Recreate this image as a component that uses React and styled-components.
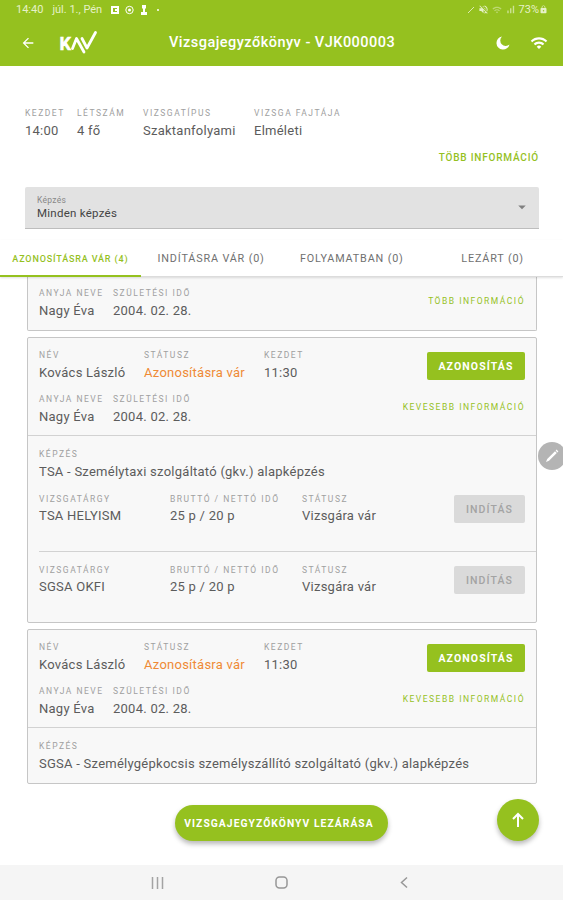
import styled, { createGlobalStyle } from "styled-components";
import { MdArrowBack, MdArrowDropDown, MdWifi, MdVolumeOff, MdSignalCellularAlt, MdLock } from "react-icons/md";

const GlobalStyle = createGlobalStyle`
  * {
    box-sizing: border-box;
  }
  body {
    margin: 0;
    background: #fff;
    font-family: Roboto, sans-serif;
  }
`;

const Screen = styled.div`
  position: relative;
  width: 563px;
  height: 900px;
  display: flex;
  flex-direction: column;
  overflow: hidden;
  color: #5c5c5c;
`;

const Header = styled.header`
  height: 66px;
  background: #95c11f;
  color: #fff;
`;

const StatusBar = styled.div`
  height: 19px;
  padding: 0 15px 0 16px;
  display: flex;
  align-items: center;
  justify-content: space-between;
  font-size: 11px;
  color: #e6f1c8;
`;

const StatusGroup = styled.div`
  display: flex;
  align-items: center;
  gap: ${(props) => props.$gap}px;
`;

const AppBar = styled.div`
  height: 47px;
  padding: 0 15px 0 20px;
  display: grid;
  grid-template-columns: 38px 60px 1fr 52px;
  align-items: center;
`;

const Title = styled.h1`
  margin: 0;
  padding-left: 51px;
  font-size: 14.5px;
  font-weight: 500;
  letter-spacing: 0.48px;
  white-space: nowrap;
`;

const HeaderIcons = styled.div`
  display: flex;
  align-items: center;
  justify-content: space-between;
`;

const Summary = styled.section`
  padding: 41px 24px 0 25px;
`;

const FieldRow = styled.div`
  display: flex;
`;

const FieldBox = styled.div`
  width: ${(props) => (props.$width ? `${props.$width}px` : "auto")};
  white-space: nowrap;
`;

const Label = styled.div`
  font-size: 8.5px;
  line-height: 12px;
  letter-spacing: 1.5px;
  text-transform: uppercase;
  color: #a0a0a0;
`;

const Value = styled.div`
  margin-top: 3px;
  font-size: 13px;
  line-height: 18px;
  letter-spacing: 0.25px;
  color: ${(props) => (props.$waiting ? "#ef8a35" : "#5c5c5c")};
`;

const InfoLink = styled.a`
  padding-bottom: ${(props) => (props.$large ? 0 : 6)}px;
  font-size: ${(props) => (props.$large ? 10 : 8.5)}px;
  line-height: 14px;
  font-weight: ${(props) => (props.$large ? 500 : 400)};
  letter-spacing: ${(props) => (props.$large ? 0.8 : 1.5)}px;
  color: #95c11f;
  white-space: nowrap;
`;

const SummaryLink = styled.div`
  display: flex;
  justify-content: flex-end;
  margin-top: 11px;
`;

const Select = styled.div`
  margin: 22px 24px 0 25px;
  height: 42px;
  padding: 0 8px 1px 12px;
  display: flex;
  align-items: center;
  justify-content: space-between;
  background: #e2e2e2;
  border-bottom: 1px solid #bdbdbd;
  border-radius: 2px 2px 0 0;
`;

const SelectLabel = styled.div`
  font-size: 8.5px;
  line-height: 12px;
  letter-spacing: 0.3px;
  color: #888;
`;

const SelectValue = styled.div`
  padding-bottom: 1px;
  font-size: 11.5px;
  line-height: 14px;
  letter-spacing: 0.25px;
  color: #444;
`;

const Tabs = styled.nav`
  position: relative;
  z-index: 1;
  height: 37px;
  margin-top: 11px;
  display: flex;
  background: #fff;
  border-bottom: 1px solid #dcdcdc;
  box-shadow: 0 1px 2px rgba(0, 0, 0, 0.12);
`;

const Tab = styled.div`
  flex: 1;
  height: 37px;
  padding-top: 2px;
  display: flex;
  align-items: center;
  justify-content: center;
  font-size: ${(props) => (props.$active ? 9 : 10.8)}px;
  font-weight: ${(props) => (props.$active ? 500 : 400)};
  letter-spacing: 0.85px;
  white-space: nowrap;
  color: ${(props) => (props.$active ? "#95c11f" : "#707070")};
  border-bottom: 2px solid ${(props) => (props.$active ? "#95c11f" : "transparent")};
`;

const List = styled.main`
  padding: 0 26px 0 27px;
  display: flex;
  flex-direction: column;
  gap: 6px;
`;

const Card = styled.article`
  border: 1px solid #c6c6c6;
  border-top-width: ${(props) => (props.$cut ? 0 : 1)}px;
  border-radius: ${(props) => (props.$cut ? "0 0 2px 2px" : "2px")};
  background: #f8f8f8;
`;

const Person = styled.div`
  padding: ${(props) => (props.$cut ? "10px 11px" : "11px 11px 9px")};
  display: flex;
  flex-direction: column;
  gap: 11px;
`;

const Split = styled.div`
  height: 33px;
  display: flex;
  align-items: center;
  justify-content: space-between;
`;

const Training = styled.div`
  padding: 12px 0 ${(props) => (props.$exams ? 0 : 10)}px 11px;
  border-top: 1px solid #d2d2d2;
`;

const Exam = styled.div`
  height: 70px;
  padding: 11px 11px 0 0;
  & + & {
    height: 71px;
    border-top: 1px solid #d2d2d2;
  }
  ${Value} {
    margin-top: 2px;
  }
`;

const Button = styled.button`
  width: ${(props) => (props.disabled ? 71 : 98)}px;
  height: 28px;
  margin-top: 1px;
  padding: 0;
  border: 0;
  border-radius: 2px;
  font-family: inherit;
  font-size: 10.5px;
  font-weight: ${(props) => (props.disabled ? 500 : 700)};
  letter-spacing: 1.1px;
  color: ${(props) => (props.disabled ? "#a3a3a3" : "#fff")};
  background: ${(props) => (props.disabled ? "#dadada" : "#95c11f")};
`;

const Actions = styled.div`
  flex: 1;
  padding-top: 21px;
  display: flex;
  justify-content: center;
`;

const CloseButton = styled.button`
  width: 213px;
  height: 36px;
  padding: 0 5px 0 0;
  border: 0;
  border-radius: 18px;
  font-family: inherit;
  font-size: 10.3px;
  font-weight: 700;
  letter-spacing: 1.05px;
  white-space: nowrap;
  color: #fff;
  background: #95c11f;
  box-shadow: 0 3px 5px rgba(0, 0, 0, 0.28);
`;

const ScrollTop = styled.button`
  position: absolute;
  right: 24px;
  bottom: 59px;
  width: 42px;
  height: 42px;
  padding: 0;
  display: flex;
  align-items: center;
  justify-content: center;
  border: 0;
  border-radius: 50%;
  background: #95c11f;
  box-shadow: 0 3px 5px rgba(0, 0, 0, 0.28);
`;

const PenHandle = styled.div`
  position: absolute;
  right: -3px;
  top: 442px;
  width: 28px;
  height: 28px;
  display: flex;
  align-items: center;
  justify-content: center;
  border-radius: 50%;
  background: #b4b4b4;
`;

const SystemNav = styled.footer`
  height: 35px;
  padding: 0 152px 0 151px;
  display: flex;
  align-items: center;
  justify-content: space-between;
  background: #f5f5f5;
`;

const Logo = () => (
  <svg width="40" height="26" viewBox="0 0 40 26" stroke="#fff">
    <text x="1.5" y="19.5" fill="#fff" strokeWidth="0.5" fontFamily="Roboto, sans-serif" fontSize="18" fontWeight="700">K</text>
    <path d="M14.500 18.500L18.500 8.500L26 22M24 8.500L29 18L37.500 2.500" fill="none" strokeWidth="2.800" strokeLinejoin="round" strokeLinecap="round" />
  </svg>
);

const Field = ({ label, value, width, waiting }) => (
  <FieldBox $width={width}>
    <Label>{label}</Label>
    <Value $waiting={waiting}>{value}</Value>
  </FieldBox>
);

const ParentRow = ({ link }) => (
  <Split>
    <FieldRow>
      <Field label="Anyja neve" value="Nagy Éva" width={74} />
      <Field label="Születési idő" value="2004. 02. 28." />
    </FieldRow>
    <InfoLink>{link}</InfoLink>
  </Split>
);

const ExamineeCard = ({ training, exams = [] }) => (
  <Card>
    <Person>
      <Split>
        <FieldRow>
          <Field label="Név" value="Kovács László" width={105} />
          <Field label="Státusz" value="Azonosításra vár" width={120} waiting />
          <Field label="Kezdet" value="11:30" />
        </FieldRow>
        <Button>AZONOSÍTÁS</Button>
      </Split>
      <ParentRow link="KEVESEBB INFORMÁCIÓ" />
    </Person>
    <Training $exams={exams.length > 0}>
      <Field label="Képzés" value={training} />
      {exams.map((exam) => (
        <Exam key={exam}>
          <Split>
            <FieldRow>
              <Field label="Vizsgatárgy" value={exam} width={131} />
              <Field label="Bruttó / Nettó idő" value="25 p / 20 p" width={132} />
              <Field label="Státusz" value="Vizsgára vár" />
            </FieldRow>
            <Button disabled>INDÍTÁS</Button>
          </Split>
        </Exam>
      ))}
    </Training>
  </Card>
);

const App = () => {
  return (
    <Screen>
      <GlobalStyle />
      <Header>
        <StatusBar>
          <StatusGroup $gap={9}>
            <span>14:40</span>
            <span>júl. 1., Pén</span>
            <svg width="52" height="10" viewBox="0 0 52 10" fill="#fff">
              <path d="M0 1h8v8H0zM2 3v4h4V6H4V4h2V3z" fillRule="evenodd" />
              <circle cx="18.500" cy="5" r="3.700" fill="none" stroke="#fff" />
              <circle cx="18.500" cy="5" r="1.500" />
              <path d="M31 0h4v3l-1 1v3h2v3h-6V7h2V4l-1-1z" />
              <circle cx="47" cy="5" r="1" />
            </svg>
          </StatusGroup>
          <StatusGroup $gap={3}>
            <svg width="8" height="8" viewBox="0 0 8 8">
              <path d="M1 7L7 1" stroke="#dcebb0" />
            </svg>
            <MdVolumeOff size={11} />
            <MdWifi size={10} opacity={0.5} />
            <MdSignalCellularAlt size={11} opacity={0.7} />
            <StatusGroup $gap={0}>
              <span>73%</span>
              <MdLock size={9} />
            </StatusGroup>
          </StatusGroup>
        </StatusBar>
        <AppBar>
          <MdArrowBack size={16} />
          <Logo />
          <Title>Vizsgajegyzőkönyv - VJK000003</Title>
          <HeaderIcons>
            <svg width="14" height="14" viewBox="0 0 14 14">
              <path d="M6 0.500A6.600 6.600 0 1 0 13.500 8.500A4.300 4.300 0 0 1 6 0.500z" fill="#fff" />
            </svg>
            <MdWifi size={18} />
          </HeaderIcons>
        </AppBar>
      </Header>

      <Summary>
        <FieldRow>
          <Field label="Kezdet" value="14:00" width={52} />
          <Field label="Létszám" value="4 fő" width={66} />
          <Field label="Vizsgatípus" value="Szaktanfolyami" width={111} />
          <Field label="Vizsga fajtája" value="Elméleti" />
        </FieldRow>
        <SummaryLink>
          <InfoLink $large>TÖBB INFORMÁCIÓ</InfoLink>
        </SummaryLink>
      </Summary>

      <Select>
        <div>
          <SelectLabel>Képzés</SelectLabel>
          <SelectValue>Minden képzés</SelectValue>
        </div>
        <MdArrowDropDown size={18} color="#808080" />
      </Select>

      <Tabs>
        <Tab $active>AZONOSÍTÁSRA VÁR (4)</Tab>
        <Tab>INDÍTÁSRA VÁR (0)</Tab>
        <Tab>FOLYAMATBAN (0)</Tab>
        <Tab>LEZÁRT (0)</Tab>
      </Tabs>

      <List>
        <Card $cut>
          <Person $cut>
            <ParentRow link="TÖBB INFORMÁCIÓ" />
          </Person>
        </Card>
        <ExamineeCard training="TSA - Személytaxi szolgáltató (gkv.) alapképzés" exams={["TSA HELYISM", "SGSA OKFI"]} />
        <ExamineeCard training="SGSA - Személygépkocsis személyszállító szolgáltató (gkv.) alapképzés" />
      </List>

      <Actions>
        <CloseButton>VIZSGAJEGYZŐKÖNYV LEZÁRÁSA</CloseButton>
      </Actions>

      <SystemNav>
        <svg width="13" height="12" viewBox="0 0 13 12">
          <path d="M1.500 0v12M6.500 0v12M11.500 0v12" stroke="#a3a3a3" strokeWidth="1.500" />
        </svg>
        <svg width="13" height="13" viewBox="0 0 13 13">
          <rect x="1" y="1" width="11" height="11" rx="3.500" fill="none" stroke="#979797" strokeWidth="1.500" />
        </svg>
        <svg width="13" height="13" viewBox="0 0 13 13">
          <path d="M9 1.500L3.500 6.500L9 11.500" fill="none" stroke="#979797" strokeWidth="1.500" />
        </svg>
      </SystemNav>

      <PenHandle>
        <svg width="14" height="14" viewBox="0 0 14 14" fill="#fff">
          <path d="M1 13L2.200 10L10 2.200L11.800 4L4 11.800zM10.600 1.600L11.600 0.600L13.400 2.400L12.400 3.400z" />
        </svg>
      </PenHandle>
      <ScrollTop>
        <svg width="12" height="16" viewBox="0 0 12 16" fill="none" stroke="#fff" strokeWidth="2">
          <path d="M6 15V2M1 7L6 2L11 7" />
        </svg>
      </ScrollTop>
    </Screen>
  );
};

export default App;
